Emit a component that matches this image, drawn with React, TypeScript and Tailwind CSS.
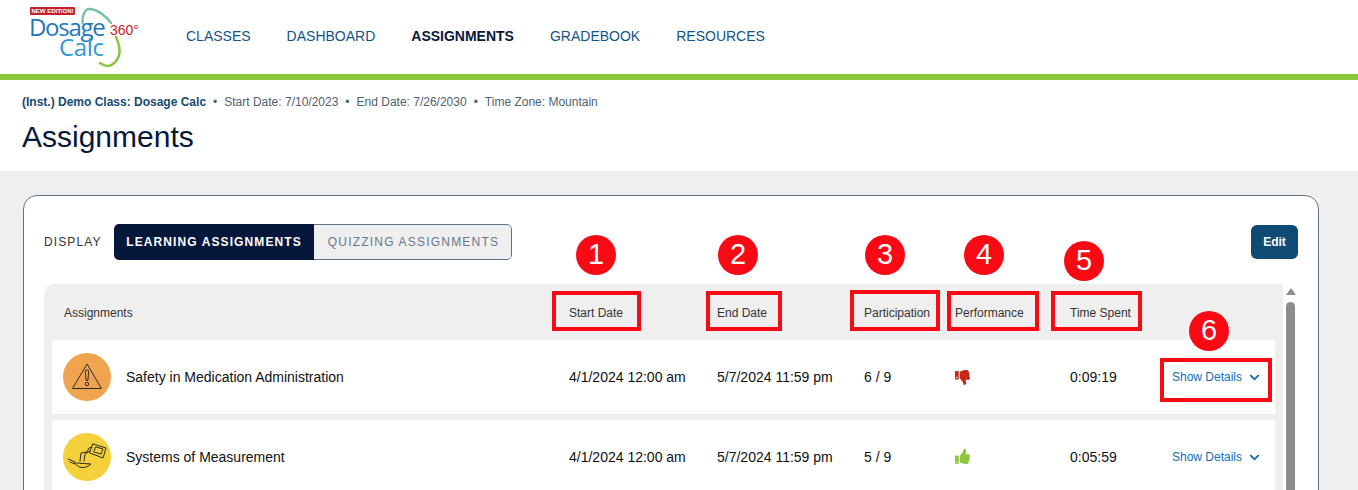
import { FaChevronDown, FaThumbsDown, FaThumbsUp } from "react-icons/fa";

const nav = ["CLASSES", "DASHBOARD", "ASSIGNMENTS", "GRADEBOOK", "RESOURCES"];

const rowGrid = "grid grid-cols-[505px_148px_147px_91px_115px_102px_auto] items-center";

const headers = ["Assignments", "Start Date", "End Date", "Participation", "Performance", "Time Spent"];

const rows = [
  { name: "Safety in Medication Administration", start: "4/1/2024 12:00 am", end: "5/7/2024 11:59 pm", part: "6 / 9", good: false, time: "0:09:19", color: "bg-[#f0a44f]" },
  { name: "Systems of Measurement", start: "4/1/2024 12:00 am", end: "5/7/2024 11:59 pm", part: "5 / 9", good: true, time: "0:05:59", color: "bg-[#f4d03a]" },
];

const markers = [
  { n: 1, cls: "left-[576px] top-[235px]" },
  { n: 2, cls: "left-[718px] top-[235px]" },
  { n: 3, cls: "left-[865px] top-[235px]" },
  { n: 4, cls: "left-[964px] top-[235px]" },
  { n: 5, cls: "left-[1064px] top-[241px]" },
  { n: 6, cls: "left-[1189px] top-[311px]" },
];

const boxes = [
  "left-[552px] top-[291px] w-[89px] h-[40px]",
  "left-[706px] top-[291px] w-[76px] h-[40px]",
  "left-[850px] top-[290px] w-[90px] h-[41px]",
  "left-[947px] top-[291px] w-[92px] h-[40px]",
  "left-[1051px] top-[291px] w-[91px] h-[40px]",
  "left-[1160px] top-[358px] w-[112px] h-[44px]",
];

function Logo() {
  return (
    <div className="relative w-[120px] h-[70px] font-['Liberation_Sans',sans-serif]">
      <svg className="absolute left-[50px] top-[6px]" width="46" height="64" viewBox="0 0 46 64" fill="none">
        <path d="M2.5 17 C 2 9 5 3 9 3 C 17 3 26 10 31 17" stroke="#7cc0a8" strokeWidth="2.5" strokeLinecap="round" />
        <path d="M36 31 C 41 42 41 52 33 58 C 29 61 24 60 20 57" stroke="#8cc63f" strokeWidth="2.5" strokeLinecap="round" />
      </svg>
      <div className="absolute left-0 top-[7px] w-[45px] h-[8px] bg-[#c4202e] text-center text-white text-[6px] font-bold leading-[8px] whitespace-nowrap rounded-[1px]">
        NEW EDITION!
      </div>
      <div className="absolute left-[-1px] top-[17px] text-[24px] leading-[20px] text-[#1f78bb] font-['Open_Sans',sans-serif] tracking-[-1.3px]">Dosage</div>
      <div className="absolute left-[29px] top-[37px] text-[24px] leading-[20px] text-[#2d9ad6] font-['Open_Sans',sans-serif] tracking-[-0.3px]">Calc</div>
      <div className="absolute left-[80px] top-[22px] text-[14px] leading-[16px] text-[#c4202e] whitespace-nowrap">360°</div>
    </div>
  );
}

function WarningIcon() {
  return (
    <svg width="32" height="30" viewBox="0 0 32 30" fill="none" stroke="#2b2b2b" strokeWidth="1" strokeLinejoin="round">
      <path d="M16 2 L30.5 26.5 H1.5 Z" />
      <path d="M14.3 9 C14.3 7.6 17.7 7.6 17.7 9 L16.9 18.5 H15.1 Z" />
      <circle cx="16" cy="22" r="1.7" />
    </svg>
  );
}

function PourIcon() {
  return (
    <svg width="40" height="32" viewBox="0 0 40 32" fill="none" stroke="#2b2b2b" strokeWidth="1" strokeLinejoin="round" strokeLinecap="round">
      <path d="M1 18 L8 21 C10 28 19 28 24 23 L10 22" />
      <path d="M3 21 L8 23" />
      <path d="M13 20 L14 12 L20 11 L22 7 L25 6" />
      <path d="M17 20 L18 13 L23 10" />
      <path d="M26 3 L39 7 L36 17 L23 12 Z" />
      <path d="M29 6 L36 8 L34 13 L27 11 Z" />
    </svg>
  );
}

export default function App() {
  return (
    <div className="relative h-[490px] overflow-hidden bg-[#efefef] font-['Liberation_Sans',sans-serif]">
      <header className="h-[80px] bg-white border-b-[6px] border-[#8cc63f] flex items-start pl-[30px]">
        <Logo />
        <nav className="ml-[36px] flex gap-[36px] pt-[27px]">
          {nav.map((n) => (
            <span
              key={n}
              className={n === "ASSIGNMENTS" ? "text-[14px] leading-[18px] font-bold text-[#051838]" : "text-[14px] leading-[18px] text-[#125488]"}
            >
              {n}
            </span>
          ))}
        </nav>
      </header>

      <div className="h-[91px] bg-white pl-[22px] pt-[15px]">
        <div className="flex items-center text-[12px] leading-[14px] text-[#50606e]">
          <span className="font-bold text-[#134a72]">(Inst.) Demo Class: Dosage Calc</span>
          <span className="mx-[7px]">•</span>
          <span>Start Date: 7/10/2023</span>
          <span className="mx-[7px]">•</span>
          <span>End Date: 7/26/2030</span>
          <span className="mx-[7px]">•</span>
          <span>Time Zone: Mountain</span>
        </div>
        <h1 className="mt-[11px] text-[30px] leading-[34px] text-[#051838]">Assignments</h1>
      </div>

      <section className="ml-[23px] mt-[24px] h-[400px] w-[1296px] bg-white border border-[#5f7486] rounded-[14px] px-[20px] pt-[28px]">
        <div className="flex items-start justify-between">
          <div className="flex items-center">
            <span className="w-[70px] text-[12px] tracking-[1.1px] text-[#333]">DISPLAY</span>
            <div className="flex h-[36px] w-[398px] text-[12px] rounded-[5px] overflow-hidden">
              <span className="w-[200px] bg-[#06173c] text-white font-bold tracking-[1.1px] flex items-center justify-center">LEARNING ASSIGNMENTS</span>
              <span className="flex-1 bg-[#efefef] text-[#66788a] tracking-[1.2px] border border-l-0 border-[#5f7486] rounded-r-[5px] flex items-center justify-center pl-[2px]">QUIZZING ASSIGNMENTS</span>
            </div>
          </div>
          <button className="mt-[1px] h-[34px] w-[47px] bg-[#0f4a75] text-white text-[12px] font-bold rounded-[6px]">Edit</button>
        </div>

        <div className="mt-[24px] flex">
          <div className="w-[1239px] bg-[#efefef] rounded-tl-[10px] px-[8px]">
            <div className={`${rowGrid} h-[56px] pl-[12px] pt-[1px] text-[12px] text-[#333]`}>
              {headers.map((h) => (
                <span key={h}>{h}</span>
              ))}
            </div>
            <div className="flex flex-col gap-[6px]">
              {rows.map((r) => (
                <div key={r.name} className={`${rowGrid} h-[74px] pl-[12px] bg-white text-[14px] text-[#111]`}>
                  <div className="flex items-center gap-[15px] -ml-[1px]">
                    <span className={`flex h-[48px] w-[48px] items-center justify-center rounded-full ${r.color}`}>
                      {r.good ? <PourIcon /> : <WarningIcon />}
                    </span>
                    <span>{r.name}</span>
                  </div>
                  <span>{r.start}</span>
                  <span>{r.end}</span>
                  <span>{r.part}</span>
                  {r.good ? (
                    <FaThumbsUp className="-mt-[2px] text-[15px] text-[#8cc63f]" />
                  ) : (
                    <FaThumbsDown className="text-[15px] text-[#c8281c]" />
                  )}
                  <span>{r.time}</span>
                  <span className="flex items-center gap-[7px] whitespace-nowrap text-[12px] text-[#1272b5]">
                    Show Details
                    <FaChevronDown className="text-[11px] text-[#0f6aa8]" />
                  </span>
                </div>
              ))}
            </div>
          </div>
          <div className="w-[15px] flex flex-col items-center pt-[4px]">
            <div className="w-0 h-0 border-x-[5px] border-x-transparent border-b-[7px] border-b-[#8c8c8c]" />
            <div className="mt-[7px] w-[9px] h-[300px] bg-[#8c8c8c] rounded-full" />
          </div>
        </div>
      </section>

      {boxes.map((b) => (
        <div key={b} className={`absolute border-[4px] border-[#f70a14] ${b}`} />
      ))}
      {markers.map((m) => (
        <div
          key={m.n}
          className={`absolute flex h-[40px] w-[40px] items-center justify-center rounded-full bg-[#f70a14] text-[29px] text-white ${m.cls}`}
        >
          {m.n}
        </div>
      ))}
    </div>
  );
}
